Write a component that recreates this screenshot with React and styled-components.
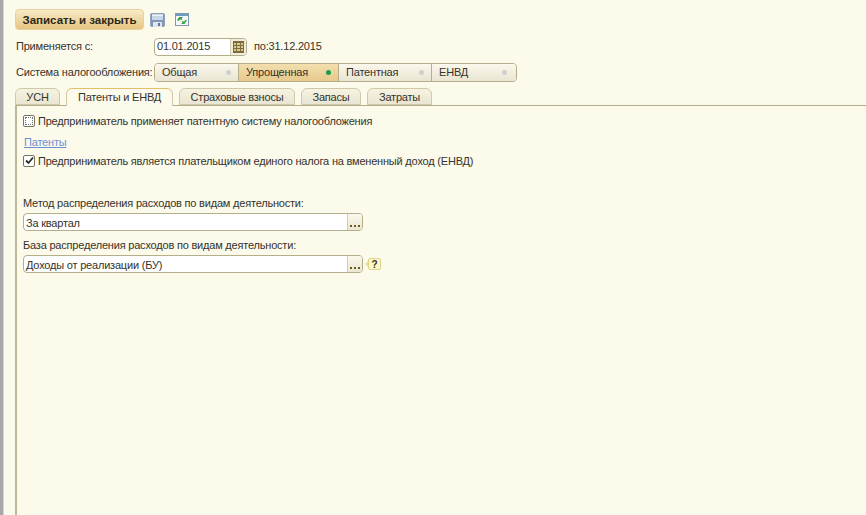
import React from "react";
import styled, { createGlobalStyle } from "styled-components";

const GlobalStyle = createGlobalStyle`
  html, body {
    margin: 0;
    padding: 0;
    height: 100%;
    overflow: hidden;
    background: #fcfaeb;
  }
  #root {
    height: 100%;
  }
`;

function SaveIcon() {
  return (
    <svg width="15" height="14" viewBox="0 0 15 14">
      <rect x="0.5" y="0.5" width="14" height="13" rx="1" fill="#7d97b8" stroke="#8ea3bd" />
      <rect x="2" y="1" width="11" height="6" fill="#c9d6e4" />
      <rect x="2" y="2" width="11" height="1" fill="#eef3f8" />
      <rect x="3" y="9" width="9" height="5" fill="#dfe5ea" />
      <rect x="8" y="10" width="2" height="3" fill="#5f7896" />
    </svg>
  );
}

function RefreshIcon() {
  return (
    <svg width="14" height="13" viewBox="0 0 14 13">
      <rect x="0.5" y="0.5" width="13" height="12" fill="#f5f9fb" stroke="#7d9ab0" />
      <rect x="1" y="1" width="12" height="2" fill="#6f9dbd" />
      <path d="M2 7 L4.5 4 L8 4 L6.5 5.5 L7.5 7 L4.5 6.5 L4 8 Z" fill="#2f9a3a" />
      <path d="M12 7 L9.5 11 L6 11 L7.5 9.5 L6.5 8 L9.5 8.5 L10 7 Z" fill="#3aa845" />
    </svg>
  );
}

function CalendarIcon() {
  return (
    <svg width="11" height="12" viewBox="0 0 11 12">
      <rect x="0" y="0" width="11" height="12" fill="#7c6c3c" />
      <path d="M1 2H3V4H1ZM4 2H7V4H4ZM8 2H10V4H8ZM1 5H3V7H1ZM4 5H7V7H4ZM8 5H10V7H8ZM1 8H3V10H1ZM4 8H7V10H4ZM8 8H10V10H8Z" fill="#d9c98f" />
    </svg>
  );
}

function DotsButton() {
  return (
    <ChoiceButton>
      <span />
      <span />
      <span />
    </ChoiceButton>
  );
}

const MODES = [
  { title: "Общая", width: 84 },
  { title: "Упрощенная", width: 100, active: true },
  { title: "Патентная", width: 93 },
  { title: "ЕНВД", width: 84 },
];

const TABS = [
  { title: "УСН", width: 45 },
  { title: "Патенты и ЕНВД", width: 107, active: true },
  { title: "Страховые взносы", width: 116 },
  { title: "Запасы", width: 60 },
  { title: "Затраты", width: 65 },
];

function App() {
  return (
    <Page>
      <GlobalStyle />
      <LeftEdge />
      <Main>
        <Toolbar>
          <SaveButton>Записать и закрыть</SaveButton>
          <ToolIcon>
            <SaveIcon />
          </ToolIcon>
          <ToolIcon>
            <RefreshIcon />
          </ToolIcon>
        </Toolbar>

        <DateRow>
          <RowLabel>Применяется с:</RowLabel>
          <DateField>
            <DateValue>01.01.2015</DateValue>
            <CalendarButton>
              <CalendarIcon />
            </CalendarButton>
          </DateField>
          <DateTo>по:31.12.2015</DateTo>
        </DateRow>

        <TaxRow>
          <RowLabel>Система налогообложения:</RowLabel>
          <Segments>
            {MODES.map((m) => (
              <Segment key={m.title} $width={m.width} $active={m.active}>
                {m.title}
                <Dot $active={m.active} />
              </Segment>
            ))}
          </Segments>
        </TaxRow>

        <Tabs>
          {TABS.map((t) => (
            <Tab key={t.title} $width={t.width} $active={t.active}>
              {t.title}
            </Tab>
          ))}
        </Tabs>

        <Pane>
          <CheckRow>
            <CheckBox>
              <DottedMark />
            </CheckBox>
            Предприниматель применяет патентную систему налогообложения
          </CheckRow>
          <LinkRow>
            <PaneLink href="#">Патенты</PaneLink>
          </LinkRow>
          <CheckRow>
            <CheckBox>
              <svg width="9" height="9" viewBox="0 0 9 9">
                <path d="M1 4.5 L3.5 7 L8 1.5" fill="none" stroke="#2b2b2b" strokeWidth="1.8" />
              </svg>
            </CheckBox>
            Предприниматель является плательщиком единого налога на вмененный доход (ЕНВД)
          </CheckRow>

          <FieldLabel $first>Метод распределения расходов по видам деятельности:</FieldLabel>
          <FieldRow>
            <SelectField>
              <SelectValue>За квартал</SelectValue>
              <DotsButton />
            </SelectField>
          </FieldRow>
          <FieldLabel>База распределения расходов по видам деятельности:</FieldLabel>
          <FieldRow>
            <SelectField>
              <SelectValue>Доходы от реализации (БУ)</SelectValue>
              <DotsButton />
            </SelectField>
            <HelpTip>?</HelpTip>
          </FieldRow>
        </Pane>
      </Main>
    </Page>
  );
}

export default App;

const Page = styled.div`
  display: flex;
  width: 866px;
  height: 515px;
  overflow: hidden;
  background: #fcfaeb;
  color: #35332a;
  font-family: "Liberation Sans", Arial, sans-serif;
  font-size: 11px;
  letter-spacing: -0.2px;
`;

const LeftEdge = styled.div`
  flex: 0 0 3px;
  background: #a9a9a9;
  border-right: 1px solid #d6d6cc;
`;

const Main = styled.div`
  flex: 1;
  min-width: 0;
  display: flex;
  flex-direction: column;
  padding: 9px 0 0 11px;
`;

const Toolbar = styled.div`
  display: flex;
  align-items: center;
  height: 21px;
`;

const SaveButton = styled.button`
  box-sizing: border-box;
  width: 129px;
  height: 21px;
  padding: 0;
  border: 1px solid #e6d09c;
  border-radius: 4px;
  background: linear-gradient(#f8ebc6, #e7c582);
  color: #2c2717;
  font-family: inherit;
  font-size: 11.5px;
  font-weight: 700;
`;

const ToolIcon = styled.span`
  display: flex;
  align-items: center;
  margin-left: 6px;
  width: 19px;
`;

const DateRow = styled.div`
  display: flex;
  align-items: center;
  height: 18px;
  margin-top: 8px;
`;

const RowLabel = styled.span`
  width: 139px;
  flex: none;
  padding: 0 0 2px 1px;
  box-sizing: border-box;
  white-space: nowrap;
`;

const DateField = styled.div`
  box-sizing: border-box;
  display: flex;
  width: 93px;
  height: 18px;
  border: 1px solid #b5ae8a;
  border-radius: 4px;
  overflow: hidden;
  background: #fff;
`;

const DateValue = styled.span`
  flex: 1;
  padding-left: 2px;
  line-height: 15px;
`;

const CalendarButton = styled.span`
  flex: 0 0 15px;
  display: flex;
  align-items: center;
  justify-content: center;
  background: #f1eddc;
  border-left: 1px solid #d2ccb0;
`;

const DateTo = styled.span`
  margin-left: 7px;
  padding-bottom: 2px;
`;

const TaxRow = styled.div`
  display: flex;
  align-items: center;
  height: 19px;
  margin-top: 7px;
`;

const Segments = styled.div`
  box-sizing: border-box;
  display: flex;
  height: 19px;
  border: 1px solid #b5ae8a;
  border-radius: 4px;
  overflow: hidden;
`;

const Segment = styled.div`
  box-sizing: border-box;
  width: ${(p) => p.$width}px;
  display: flex;
  align-items: center;
  justify-content: space-between;
  padding: 0 7px 1px 7px;
  border-right: 1px solid #b5ae8a;
  background: ${(p) =>
    p.$active
      ? "linear-gradient(#f3dfae, #e6c98c)"
      : "linear-gradient(#fbf8ec, #e9e5d2)"};

  &:last-child {
    border-right: 0;
    padding-right: 9px;
  }
`;

const Dot = styled.span`
  width: 5px;
  height: 5px;
  border-radius: 50%;
  background: ${(p) => (p.$active ? "#1f9a55" : "#cfcfd2")};
`;

const Tabs = styled.div`
  display: flex;
  gap: 6px;
  height: 17px;
  margin-top: 6px;
`;

const Tab = styled.div`
  box-sizing: border-box;
  width: ${(p) => p.$width}px;
  height: ${(p) => (p.$active ? "18px" : "17px")};
  position: relative;
  z-index: ${(p) => (p.$active ? 1 : 0)};
  display: flex;
  align-items: center;
  justify-content: center;
  padding-bottom: ${(p) => (p.$active ? "1px" : "0")};
  border: 1px solid #cfc9a8;
  border-bottom: ${(p) => (p.$active ? "0" : "1px solid #cfc9a8")};
  border-top-color: ${(p) => (p.$active ? "#e3bf6a" : "#cfc9a8")};
  border-radius: 6px 6px 0 0;
  background: ${(p) =>
    p.$active ? "#fcfaeb" : "linear-gradient(#f6f3e2, #e9e5d2)"};
`;

const Pane = styled.div`
  flex: 1;
  display: flex;
  flex-direction: column;
  border-top: 1px solid #b5ae8a;
  border-left: 2px solid #bdb897;
  padding: 8px 0 0 6px;
`;

const CheckRow = styled.label`
  display: flex;
  align-items: center;
  height: 13px;
  gap: 3px;
  white-space: nowrap;
`;

const CheckBox = styled.span`
  box-sizing: border-box;
  flex: none;
  width: 12px;
  height: 12px;
  display: flex;
  align-items: center;
  justify-content: center;
  background: #fff;
  border: 1px solid #77735f;
  border-radius: 2px;
`;

const DottedMark = styled.span`
  box-sizing: border-box;
  width: 8px;
  height: 8px;
  border: 1px dotted #6f6f78;
`;

const LinkRow = styled.div`
  height: 13px;
  margin: 9px 0 5px 1px;
`;

const PaneLink = styled.a`
  color: #6a90d2;
`;

const FieldLabel = styled.div`
  height: 13px;
  margin-top: ${(p) => (p.$first ? "30px" : "8px")};
  margin-bottom: 3px;
`;

const FieldRow = styled.div`
  display: flex;
  align-items: center;
  gap: 5px;
`;

const SelectField = styled.div`
  box-sizing: border-box;
  display: flex;
  width: 340px;
  height: 18px;
  border: 1px solid #b5ae8a;
  border-radius: 4px;
  overflow: hidden;
  background: #fff;
`;

const SelectValue = styled.span`
  flex: 1;
  padding-left: 2px;
  line-height: 18px;
`;

const ChoiceButton = styled.span`
  flex: 0 0 15px;
  display: flex;
  align-items: flex-end;
  justify-content: center;
  gap: 2px;
  padding-bottom: 3px;
  box-sizing: border-box;
  background: linear-gradient(#fbf8ec, #ebe6d2);
  border-left: 1px solid #d2ccb0;

  > span {
    width: 2px;
    height: 2px;
    background: #6b5a1c;
  }
`;

const HelpTip = styled.span`
  box-sizing: border-box;
  position: relative;
  width: 13px;
  height: 12px;
  display: flex;
  align-items: center;
  justify-content: center;
  border: 1px solid #dcd48e;
  border-radius: 2px;
  background: #fdf8c4;
  color: #35332a;
  font-weight: 700;
  font-size: 10px;

  &::before {
    content: "";
    position: absolute;
    left: -4px;
    top: 2px;
    width: 0;
    height: 0;
    border-top: 3px solid transparent;
    border-bottom: 3px solid transparent;
    border-right: 3px solid #e8e0a8;
  }
`;
